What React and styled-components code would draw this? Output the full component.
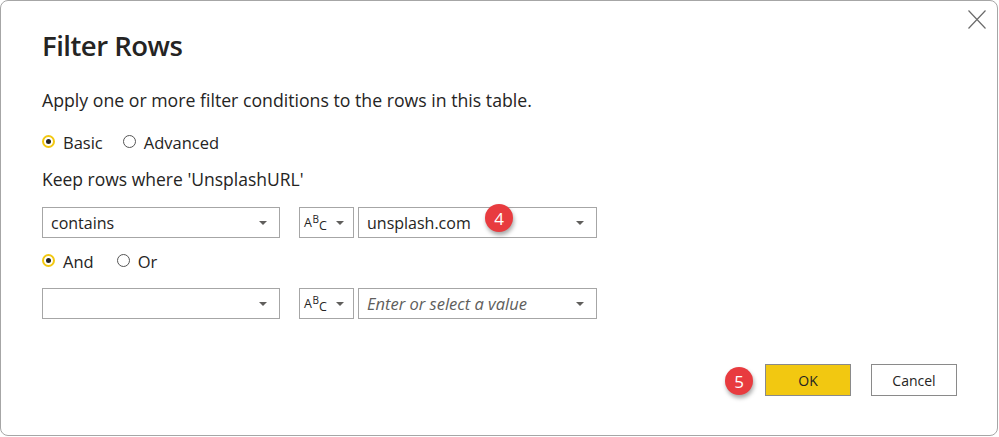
import React from "react";
import styled, { createGlobalStyle } from "styled-components";

const Global = createGlobalStyle`
  html, body { margin: 0; padding: 0; background: #ffffff; }
  body { font-family: "Open Sans", "Noto Sans", sans-serif; color: #252423; }
`;

const Dialog = styled.div`
  position: relative;
  box-sizing: border-box;
  width: 998px;
  height: 436px;
  border: 1px solid #a6a6a6;
  border-radius: 8px;
  background: #ffffff;
  padding: 27px 40px 0 41px;
  display: flex;
  flex-direction: column;
`;

const Close = styled.button`
  position: absolute;
  top: 9px;
  right: 11px;
  width: 18px;
  height: 19px;
  padding: 0;
  border: none;
  background: none;
  display: flex;
  align-items: center;
  justify-content: center;
`;

const Title = styled.h1`
  margin: 0;
  font-size: 27.5px;
  letter-spacing: -0.5px;
  font-weight: 600;
  line-height: 36px;
  color: #252423;
`;

const Text = styled.p`
  margin: ${(p) => p.$mt || 0}px 0 0 0;
  font-size: ${(p) => p.$size}px;
  line-height: 24px;
  color: #252423;
`;

const RadioGroup = styled.div`
  display: flex;
  align-items: center;
  gap: ${(p) => p.$gap}px;
  margin-top: ${(p) => p.$mt}px;
  height: 22px;
`;

const RadioLabel = styled.label`
  display: flex;
  align-items: center;
  gap: 8px;
  font-size: 16.5px;
  line-height: 22px;
  color: #252423;
`;

const RadioCircle = styled.span`
  box-sizing: border-box;
  width: 13px;
  height: 13px;
  margin-bottom: 3px;
  border-radius: 50%;
  border: ${(p) => (p.$on ? "2px solid #f2c811" : "1.6px solid #555555")};
  display: flex;
  align-items: center;
  justify-content: center;
  &::after {
    content: "";
    display: ${(p) => (p.$on ? "block" : "none")};
    width: 5px;
    height: 5px;
    border-radius: 50%;
    background: #252423;
  }
`;

const Row = styled.div`
  display: flex;
  align-items: center;
  margin-top: ${(p) => p.$mt}px;
  height: 31px;
`;

const Select = styled.div`
  position: relative;
  box-sizing: border-box;
  width: ${(p) => p.$w}px;
  height: 31px;
  margin-left: ${(p) => p.$ml || 0}px;
  border: 1px solid #a6a6a6;
  background: #fff;
  display: flex;
  align-items: center;
  padding: 0 ${(p) => p.$pr ?? 12}px 0 ${(p) => p.$pl ?? 8}px;
  font-size: 16px;
  color: #252423;
`;

const Value = styled.span`
  flex: 1;
  white-space: nowrap;
  font-style: ${(p) => (p.$placeholder ? "italic" : "normal")};
  font-size: ${(p) => (p.$placeholder ? "16.5px" : "16px")};
  color: ${(p) => (p.$placeholder ? "#605e5c" : "#252423")};
`;

const Caret = styled.span`
  width: 0;
  height: 0;
  border-left: 4px solid transparent;
  border-right: 4px solid transparent;
  border-top: 4px solid #605e5c;
`;

const TypeIcon = styled.span`
  flex: 1;
  font-size: 12.5px;
  line-height: 1;
  color: #252423;
  display: flex;
  align-items: flex-end;
  padding-top: 2px;
  sup, sub { vertical-align: baseline; position: relative; }
  sup { font-size: 10px; top: -6px; margin-left: 0.5px; }
  sub { font-size: 12.5px; top: 3px; }
`;

const Badge = styled.span`
  position: absolute;
  left: ${(p) => p.$x}px;
  top: ${(p) => p.$y}px;
  width: 28px;
  height: 28px;
  border-radius: 50%;
  background: #e83b3f;
  color: #fff;
  font-size: 17px;
  display: flex;
  align-items: center;
  justify-content: center;
  box-shadow: 1px 3px 4px rgba(0, 0, 0, 0.35);
`;

const Footer = styled.div`
  display: flex;
  justify-content: flex-end;
  align-items: center;
  gap: 20px;
  margin-top: 45px;
`;

const BadgeSlot = styled.div`
  position: relative;
  width: 28px;
  height: 32px;
  margin-right: -8px;
`;

const Button = styled.button`
  box-sizing: border-box;
  width: 86px;
  height: 32px;
  border: 1px solid #8a8a8a;
  background: ${(p) => (p.$primary ? "#f2c811" : "#ffffff")};
  color: #252423;
  font-family: inherit;
  font-size: 14px;
  padding: 0;
`;

const TypeSelect = () => (
  <Select $w={55} $ml={19} $pl={4} $pr={9}>
    <TypeIcon>
      A<sup>B</sup>
      <sub>C</sub>
    </TypeIcon>
    <Caret />
  </Select>
);

export default function App() {
  return (
    <>
      <Global />
      <Dialog>
        <Close aria-label="Close">
          <svg width="18" height="19" viewBox="0 0 18 19">
            <path d="M0.5 0.5 L17.5 18.5 M17.5 0.5 L0.5 18.5" stroke="#6b6b6b" strokeWidth="1.2" />
          </svg>
        </Close>
        <Title>Filter Rows</Title>
        <Text $mt={24} $size={17.7}>
          Apply one or more filter conditions to the rows in this table.
        </Text>
        <RadioGroup $mt={20} $gap={20}>
          <RadioLabel>
            <RadioCircle $on />
            Basic
          </RadioLabel>
          <RadioLabel>
            <RadioCircle />
            Advanced
          </RadioLabel>
        </RadioGroup>
        <Text $mt={13} $size={17.5}>
          Keep rows where 'UnsplashURL'
        </Text>
        <Row $mt={16}>
          <Select $w={238}>
            <Value>contains</Value>
            <Caret />
          </Select>
          <TypeSelect />
          <Select $w={239} $ml={4}>
            <Value>unsplash.com</Value>
            <Caret />
            <Badge $x={126} $y={-4}>4</Badge>
          </Select>
        </Row>
        <RadioGroup $mt={13} $gap={23}>
          <RadioLabel>
            <RadioCircle $on />
            And
          </RadioLabel>
          <RadioLabel>
            <RadioCircle />
            Or
          </RadioLabel>
        </RadioGroup>
        <Row $mt={15}>
          <Select $w={238}>
            <Value />
            <Caret />
          </Select>
          <TypeSelect />
          <Select $w={239} $ml={4}>
            <Value $placeholder>Enter or select a value</Value>
            <Caret />
          </Select>
        </Row>
        <Footer>
          <BadgeSlot>
            <Badge $x={0} $y={3}>5</Badge>
          </BadgeSlot>
          <Button $primary>OK</Button>
          <Button>Cancel</Button>
        </Footer>
      </Dialog>
    </>
  );
}
